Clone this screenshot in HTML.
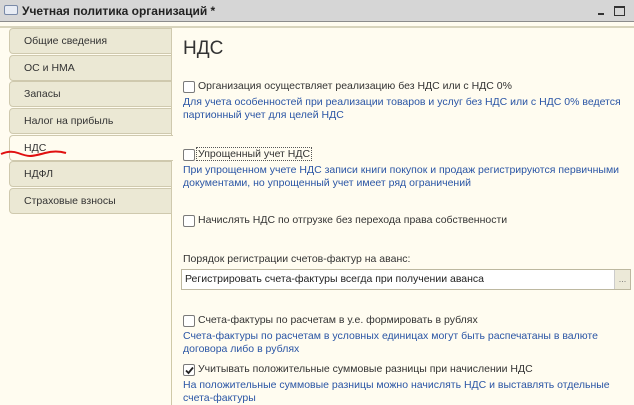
<!DOCTYPE html>
<html><head><meta charset="utf-8"><style>
*{margin:0;padding:0;box-sizing:border-box}
body{width:634px;height:405px;overflow:hidden;background:#fffcf0;font-family:"Liberation Sans","DejaVu Sans",sans-serif;font-size:10.5px;color:#333;position:relative}
.a{position:absolute;white-space:nowrap}
.title{left:0;top:0;width:634px;height:22px;background:#d6d6d6;border-bottom:1px solid #8c8c8c}
.sep{left:0;top:26px;width:634px;height:2px;background:#d8d4bc}
.tabs{left:0;top:28px;width:172px;height:377px;background:#fffcf0;border-right:1px solid #cfc9a8}
.tab{position:absolute;left:9px;width:163px;height:26px;background:#ebe8d4;border:1px solid #cfc9ae;border-radius:4px 0 0 4px;padding-left:14px;line-height:24px;color:#333}
.tab.sel{background:#fffcf0;border-right:none;width:164px}
.cb{position:absolute;width:12px;height:12px;border:1px solid #7a7a7a;border-radius:2px;background:#fff}
.blue{color:#2a55a5}
</style></head><body>
<div class="a title"></div>
<div class="a" style="left:4px;top:5px;width:14px;height:10px;border:1px solid #7a8aa8;border-radius:2px;background:#e8ecf4"></div>
<div class="a" style="left:22px;top:4px;font-weight:bold;font-size:12px;color:#222">Учетная политика организаций *</div>
<div class="a" style="left:598px;top:13px;width:6px;height:2px;background:#333"></div>
<div class="a" style="left:614px;top:6px;width:11px;height:10px;border:1px solid #333;border-top-width:2px"></div>
<div class="a sep"></div>
<div class="a tabs">
<div class="tab" style="top:0">Общие сведения</div>
<div class="tab" style="top:27px">ОС и НМА</div>
<div class="tab" style="top:53px">Запасы</div>
<div class="tab" style="top:80px">Налог на прибыль</div>
<div class="tab sel" style="top:107px">НДС</div>
<div class="tab" style="top:133px">НДФЛ</div>
<div class="tab" style="top:160px">Страховые взносы</div>
</div>
<svg class="a" style="left:0;top:148px" width="70" height="12"><path d="M1 6 Q10 2 18 5 T30 8 T45 5 T66 5" stroke="#e01010" stroke-width="2" fill="none"/></svg>
<div class="a" style="left:183px;top:38px;font-size:19px;color:#333">НДС</div>
<div class="cb" style="left:183px;top:81px"></div>
<div class="a" style="left:198px;top:80px">Организация осуществляет реализацию без НДС или с НДС 0%</div>
<div class="a blue" style="left:183px;top:96px">Для учета особенностей при реализации товаров и услуг без НДС или с НДС 0% ведется</div>
<div class="a blue" style="left:183px;top:109px">партионный учет для целей НДС</div>
<div class="cb" style="left:183px;top:149px"></div>
<div class="a" style="left:196px;top:147px;border:1px dotted #555;padding:0 1px">Упрощенный учет НДС</div>
<div class="a blue" style="left:183px;top:164px">При упрощенном учете НДС записи книги покупок и продаж регистрируются первичными</div>
<div class="a blue" style="left:183px;top:177px">документами, но упрощенный учет имеет ряд ограничений</div>
<div class="cb" style="left:183px;top:215px"></div>
<div class="a" style="left:198px;top:214px">Начислять НДС по отгрузке без перехода права собственности</div>
<div class="a" style="left:183px;top:253px">Порядок регистрации счетов-фактур на аванс:</div>
<div class="a" style="left:181px;top:269px;width:450px;height:21px;background:#fff;border:1px solid #bdb8a0"></div>
<div class="a" style="left:185px;top:273px;color:#222">Регистрировать счета-фактуры всегда при получении аванса</div>
<div class="a" style="left:614px;top:270px;width:16px;height:19px;background:#ece9d8;border-left:1px solid #ccc;color:#777;font-size:9px;text-align:center;line-height:19px">...</div>
<div class="cb" style="left:183px;top:315px"></div>
<div class="a" style="left:198px;top:314px">Счета-фактуры по расчетам в у.е. формировать в рублях</div>
<div class="a blue" style="left:183px;top:330px">Счета-фактуры по расчетам в условных единицах могут быть распечатаны в валюте</div>
<div class="a blue" style="left:183px;top:343px">договора либо в рублях</div>
<div class="cb" style="left:183px;top:364px"></div>
<svg class="a" style="left:184px;top:365px" width="11" height="11"><path d="M2 5.5 L4.5 8 L9 2.5" stroke="#222" stroke-width="1.8" fill="none"/></svg>
<div class="a" style="left:198px;top:363px">Учитывать положительные суммовые разницы при начислении НДС</div>
<div class="a blue" style="left:183px;top:379px">На положительные суммовые разницы можно начислять НДС и выставлять отдельные</div>
<div class="a blue" style="left:183px;top:392px">счета-фактуры</div>
</body></html>
